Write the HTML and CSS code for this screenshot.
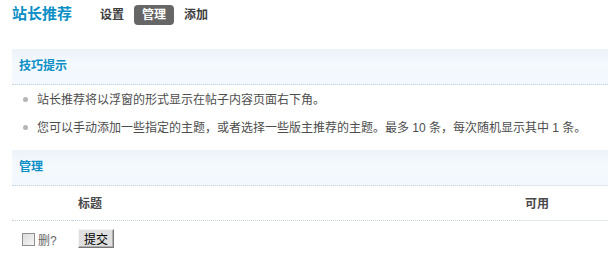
FILE: index.html
```html
<!DOCTYPE html>
<html lang="zh-CN">
<head>
<meta charset="utf-8">
<title>站长推荐</title>
<link rel="stylesheet" href="styles.css">
</head>
<body>
<div class="page">
  <div class="itemtitle">
    <h3 class="title">站长推荐</h3>
    <ul class="tabs">
      <li class="tab">设置</li>
      <li class="tab current">管理</li>
      <li class="tab">添加</li>
    </ul>
  </div>

  <div class="partition first">技巧提示</div>
  <ul class="tips">
    <li class="tip">站长推荐将以浮窗的形式显示在帖子内容页面右下角。</li>
    <li class="tip">您可以手动添加一些指定的主题，或者选择一些版主推荐的主题。最多 10 条，每次随机显示其中 1 条。</li>
  </ul>

  <div class="partition">管理</div>
  <div class="row head">
    <div class="cell c1"></div>
    <div class="cell c2">标题</div>
    <div class="cell c3">可用</div>
  </div>
  <div class="row foot">
    <label class="cell c1 del"><input type="checkbox" class="chk">删?</label>
    <div class="cell c2"><button type="button" class="btn">提交</button></div>
    <div class="cell c3 empty"></div>
  </div>
</div>
</body>
</html>
```

FILE: styles.css
```css
html, body {
  margin: 0;
  padding: 0;
  background: #fff;
}
body {
  font-family: "Liberation Sans", "Noto Sans CJK SC", sans-serif;
  font-size: 12px;
  color: #555;
  overflow: hidden;
}
.page {
  padding-left: 12px;
}
.itemtitle {
  display: flex;
  align-items: center;
  height: 20px;
  padding-top: 5px;
}
.title {
  margin: -3px 0 0 0;
  font-size: 15px;
  font-weight: bold;
  color: #0b8fc6;
  line-height: 20px;
  width: 88px;
}
.tabs {
  list-style: none;
  margin: 0;
  padding: 0;
  display: flex;
  align-items: center;
  gap: 10px;
}
.tab {
  font-weight: bold;
  color: #3c3c3c;
  font-size: 12px;
  line-height: 20px;
  height: 20px;
}
.tab.current {
  background: #666;
  color: #fff;
  border-radius: 4px;
  padding: 0 8px;
}
.partition {
  height: 35px;
  line-height: 35px;
  padding-left: 7px;
  font-weight: bold;
  font-size: 12px;
  color: #0b8fc6;
  background: linear-gradient(#ecf3f9, #f3f9fd 40%, #f2f8fd);
  border-bottom: 1px dotted #c3d3de;
}
.partition.first {
  margin-top: 24px;
}
.tips {
  list-style: none;
  margin: 0;
  padding: 1px 0 8px 0;
}
.tip {
  position: relative;
  line-height: 28px;
  padding-left: 25px;
  color: #4d4d4d;
  white-space: nowrap;
}
.tip::before {
  content: "";
  position: absolute;
  left: 11px;
  top: 11px;
  width: 5px;
  height: 5px;
  border-radius: 50%;
  background: #b5b5b5;
}
.row {
  display: flex;
}
.cell.c1 {
  width: 60px;
  padding-left: 10px;
  box-sizing: border-box;
}
.cell.c2 {
  width: 448px;
  padding-left: 6px;
  box-sizing: border-box;
}
.cell.c3 {
  flex: 1;
  padding-left: 5px;
}
.row.head {
  height: 35px;
}
.row.head .cell {
  padding-top: 2px;
  line-height: 33px;
  font-weight: bold;
  color: #4a4a4a;
  border-bottom: 1px dotted #c3d3de;
}
.row.head .cell.c3 {
  border-top: 1px solid #e3e8ec;
  border-bottom: 1px solid #e3e8ec;
  margin-top: -1px;
  background: #fff;
}
.row.foot {
  padding-top: 8px;
}
.del {
  display: flex;
  align-items: center;
  height: 19px;
  color: #666;
  padding-top: 1px;
}
.chk {
  appearance: none;
  -webkit-appearance: none;
  width: 13px;
  height: 13px;
  margin: 0 3px 0 0;
  border: 1px solid #8e8f8f;
  box-sizing: border-box;
  background: linear-gradient(135deg, #dcdcdc, #f6f6f6);
}
.btn {
  height: 19px;
  width: 36px;
  padding: 0;
  font-family: "Noto Sans CJK SC", sans-serif;
  font-size: 12px;
  line-height: 17px;
  color: #000;
  background: #dfdfdf;
  border: 1px solid;
  border-color: #f4f4f4 #777 #777 #f4f4f4;
  box-shadow: inset -1px -1px 0 #b0b0b0;
}
```
